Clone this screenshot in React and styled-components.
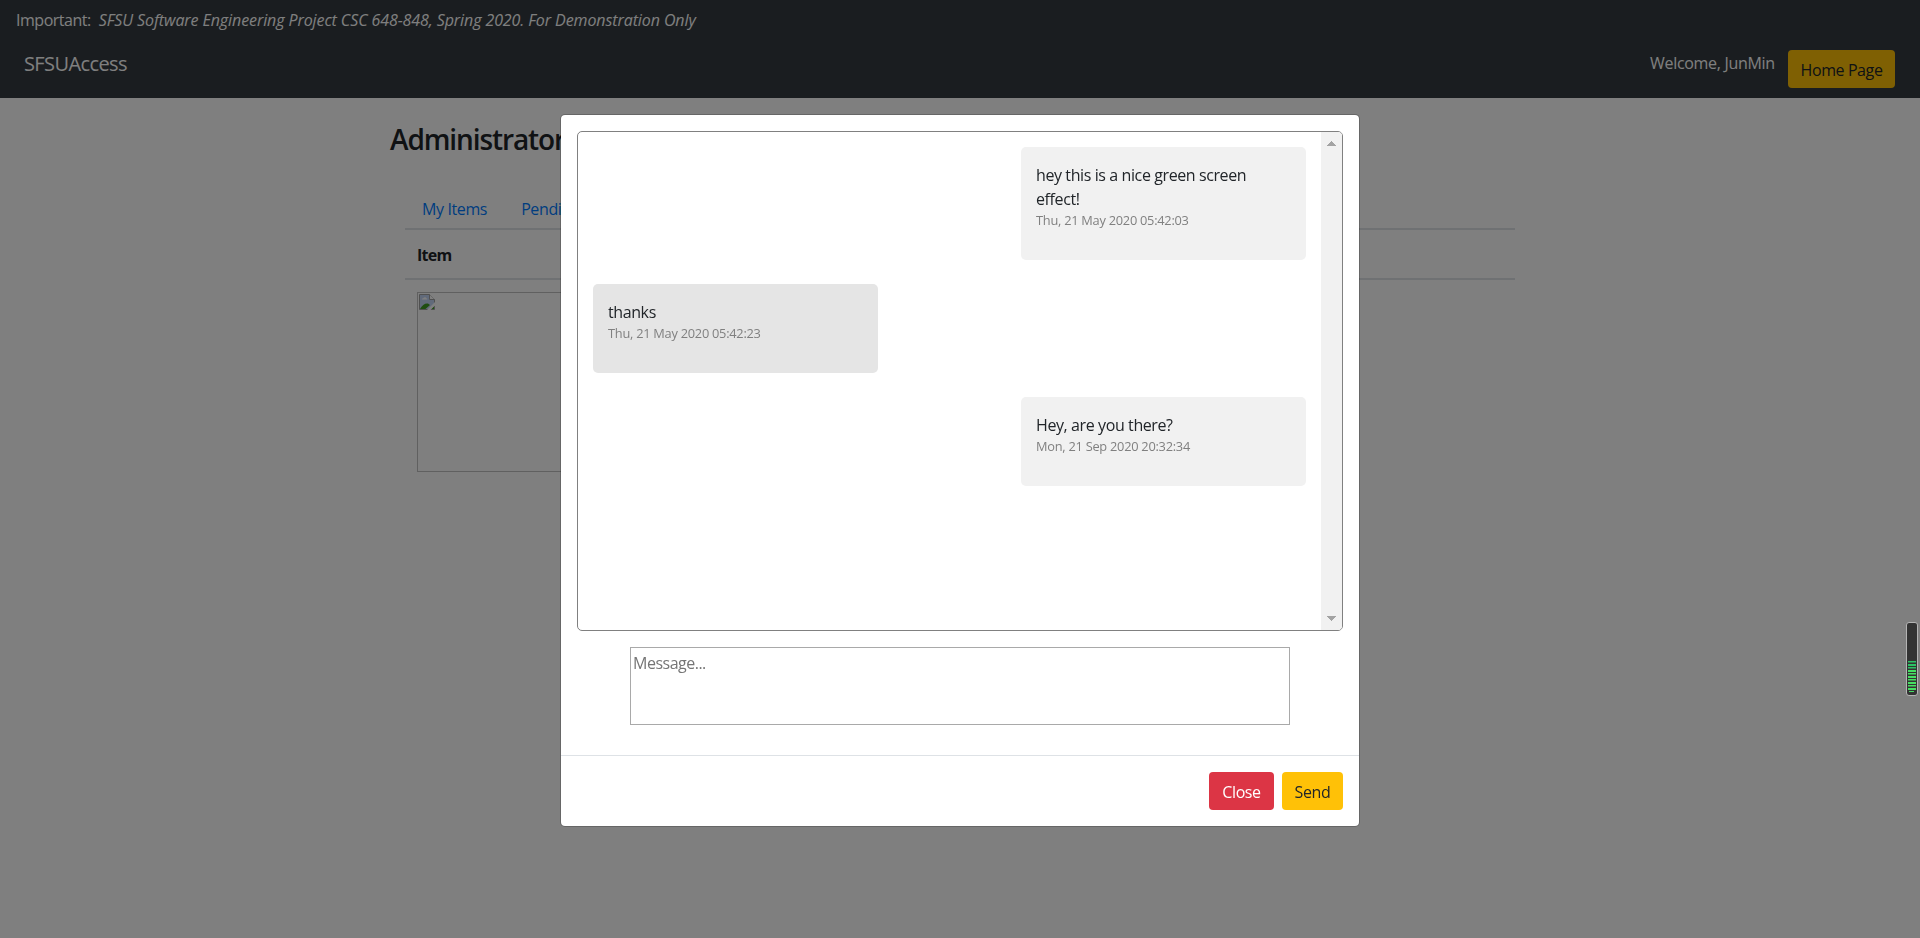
import React from "react";
import styled, { createGlobalStyle } from "styled-components";

const GlobalStyle = createGlobalStyle`
  *, *::before, *::after { box-sizing: border-box; }
  body {
    margin: 0;
    background: #fff;
    color: #212529;
    font-family: "Segoe UI", "Open Sans", "Noto Sans", sans-serif;
    font-size: 16px;
    line-height: 24px;
    overflow: hidden;
  }
`;

const Page = styled.div`
  height: 938px;
  overflow: hidden;
`;

const Header = styled.header`
  height: 98px;
  background: #343a40;
  color: #fff;
`;

const Notice = styled.div`
  height: 38px;
  padding: 8px 16px 0;
  white-space: nowrap;
  letter-spacing: -0.48px;
`;

const NoticeText = styled.em`
  margin-left: 8px;
  letter-spacing: -0.09px;
`;

const Nav = styled.nav`
  display: flex;
  justify-content: space-between;
  align-items: flex-start;
  padding: 12px 25px 0 24px;
`;

const Brand = styled.span`
  padding-top: 1px;
  font-size: 20px;
  line-height: 26px;
  letter-spacing: -0.6px;
`;

const NavRight = styled.div`
  display: flex;
  gap: 14px;
`;

const Welcome = styled.span`
  width: 124px;
  padding-top: 1px;
  white-space: nowrap;
  letter-spacing: -0.3px;
`;

const Button = styled.button`
  width: ${(p) => p.$width};
  height: 38px;
  padding: 1px 0 0;
  border: 0;
  border-radius: 4px;
  background: ${(p) => (p.$danger ? "#dc3545" : "#ffc107")};
  color: ${(p) => (p.$danger ? "#fff" : "#212529")};
  font: inherit;
  white-space: nowrap;
  letter-spacing: -0.4px;
`;

const Container = styled.main`
  width: 1140px;
  margin: 0 auto;
  padding: 24px 0 0;
`;

const Title = styled.h1`
  margin: 0;
  font-size: 28px;
  line-height: 34px;
  font-weight: 600;
  letter-spacing: -1.1px;
`;

const Panel = styled.section`
  margin: 40px 15px 0;
`;

const Tabs = styled.div`
  display: flex;
  gap: 34px;
  height: 32px;
  padding: 1px 0 0 17px;
`;

const Tab = styled.a`
  color: #007bff;
  white-space: nowrap;
  letter-spacing: -0.38px;
`;

const HeadRow = styled.div`
  height: 52px;
  padding: 13px 12px 0;
  border-top: 2px solid #dee2e6;
  border-bottom: 2px solid #dee2e6;
  font-weight: 700;
  letter-spacing: -0.7px;
`;

const ItemCell = styled.div`
  padding: 12px;
`;

const MissingImage = styled.div`
  width: 180px;
  height: 180px;
  padding: 1px;
  border: 1px solid #c0c0c0;
  line-height: 0;
`;

const Backdrop = styled.div`
  position: fixed;
  inset: 0;
  background: rgba(0, 0, 0, 0.5);
  display: flex;
  justify-content: center;
  align-items: flex-start;
  padding-top: 114px;
`;

const Dialog = styled.div`
  width: 800px;
  height: 713px;
  background: #fff;
  background-clip: padding-box;
  border: 1px solid rgba(0, 0, 0, 0.2);
  border-radius: 5px;
`;

const DialogBody = styled.div`
  height: 640px;
  padding: 16px;
`;

const Chat = styled.div`
  display: flex;
  height: 500px;
  border: 1px solid #808080;
  border-radius: 5px;
  overflow: hidden;
`;

const Messages = styled.div`
  flex: 1;
  display: flex;
  flex-direction: column;
  gap: 24px;
  padding: 15px;
`;

const Bubble = styled.div`
  width: 285px;
  padding: 16px 15px 30px;
  border-radius: 5px;
  align-self: ${(p) => (p.$mine ? "flex-end" : "flex-start")};
  background: ${(p) => (p.$mine ? "#f1f1f1" : "#e5e5e5")};
`;

const BubbleText = styled.div`
  letter-spacing: -0.4px;
`;

const Stamp = styled.div`
  height: 19px;
  color: #808080;
  font-size: 12.8px;
  line-height: 19px;
  letter-spacing: -0.25px;
`;

const ScrollTrack = styled.div`
  display: flex;
  flex-direction: column;
  justify-content: space-between;
  align-items: center;
  width: 21px;
  padding: 9px 0;
  background: #f1f1f1;
`;

const Compose = styled.textarea`
  display: block;
  width: 660px;
  height: 78px;
  margin: 16px auto 0;
  padding: 3px 2px 2px;
  border: 1px solid #a9a9a9;
  resize: none;
  font: inherit;
  letter-spacing: -0.5px;
  &::placeholder { color: #757575; }
`;

const DialogFooter = styled.div`
  display: flex;
  justify-content: flex-end;
  gap: 8px;
  padding: 16px 16px 0;
  border-top: 1px solid #dee2e6;
`;

const Meter = styled.div`
  position: fixed;
  top: 622px;
  left: 1906px;
  line-height: 0;
`;

const messages = [
  { mine: true, lines: ["hey this is a nice green screen", "effect!"], time: "Thu, 21 May 2020 05:42:03" },
  { mine: false, lines: ["thanks"], time: "Thu, 21 May 2020 05:42:23" },
  { mine: true, lines: ["Hey, are you there?"], time: "Mon, 21 Sep 2020 20:32:34" },
];

function BrokenImageIcon() {
  return (
    <svg width="16" height="16" viewBox="0 0 16 16">
      <path d="M0.5 15.5V.5h10l5 5v10z" fill="#c3d5f5" stroke="#a0a0a0" />
      <path d="M10.5 .5v5h5" fill="#fff" stroke="#a0a0a0" />
      <path d="M3 5.5c0-1 1-1 1.200-1.200C5 2.800 7 3 7.300 4.300 8.500 4.300 8.500 5.500 8 5.500z" fill="#fff" />
      <path d="M1 15c2-4 5-6 8-5.500l2 1.500-4.500 4z" fill="#3f9c25" />
      <path d="M12 15l3-3v3z" fill="#3f9c25" />
      <path d="M8 16l8-8v3.500l-4.500 4.500z" fill="#fff" />
    </svg>
  );
}

function Arrow({ down }) {
  return (
    <svg width="9" height="5" viewBox="0 0 9 5" shapeRendering="crispEdges">
      <path d={down ? "M0 0H9L4.500 5z" : "M0 5H9L4.500 0z"} fill="#a3a3a3" />
    </svg>
  );
}

function LevelMeter() {
  const bars = Array.from({ length: 10 }, (_, i) => i);
  return (
    <Meter>
      <svg width="12" height="74" viewBox="0 0 12 74">
        <rect x="0.5" y="0.5" width="11" height="73" rx="2.500" fill="#333" stroke="#b4b4b4" />
        {bars.map((i) => (
          <rect key={i} x="2" y={39 + i * 3} width="8" height={i % 2 ? 2 : 1.500} fill={i < 3 ? "#2bc264" : "#45df62"} />
        ))}
        <rect x="3" y="69" width="5" height="1" fill="#45df62" />
      </svg>
    </Meter>
  );
}

export default function App() {
  return (
    <>
      <GlobalStyle />
      <Page>
        <Header>
          <Notice>
            Important:<NoticeText>SFSU Software Engineering Project CSC 648-848, Spring 2020. For Demonstration Only</NoticeText>
          </Notice>
          <Nav>
            <Brand>SFSUAccess</Brand>
            <NavRight>
              <Welcome>Welcome, JunMin</Welcome>
              <Button $width="107px">Home Page</Button>
            </NavRight>
          </Nav>
        </Header>
        <Container>
          <Title>Administrator</Title>
          <Panel>
            <Tabs>
              <Tab>My Items</Tab>
              <Tab>Pending</Tab>
            </Tabs>
            <HeadRow>Item</HeadRow>
            <ItemCell>
              <MissingImage><BrokenImageIcon /></MissingImage>
            </ItemCell>
          </Panel>
        </Container>
      </Page>
      <Backdrop>
        <Dialog>
          <DialogBody>
            <Chat>
              <Messages>
                {messages.map((m) => (
                  <Bubble key={m.time} $mine={m.mine}>
                    {m.lines.map((line) => <BubbleText key={line}>{line}</BubbleText>)}
                    <Stamp>{m.time}</Stamp>
                  </Bubble>
                ))}
              </Messages>
              <ScrollTrack>
                <Arrow />
                <Arrow down />
              </ScrollTrack>
            </Chat>
            <Compose placeholder="Message..." />
          </DialogBody>
          <DialogFooter>
            <Button $danger $width="65px">Close</Button>
            <Button $width="61px">Send</Button>
          </DialogFooter>
        </Dialog>
      </Backdrop>
      <LevelMeter />
    </>
  );
}
